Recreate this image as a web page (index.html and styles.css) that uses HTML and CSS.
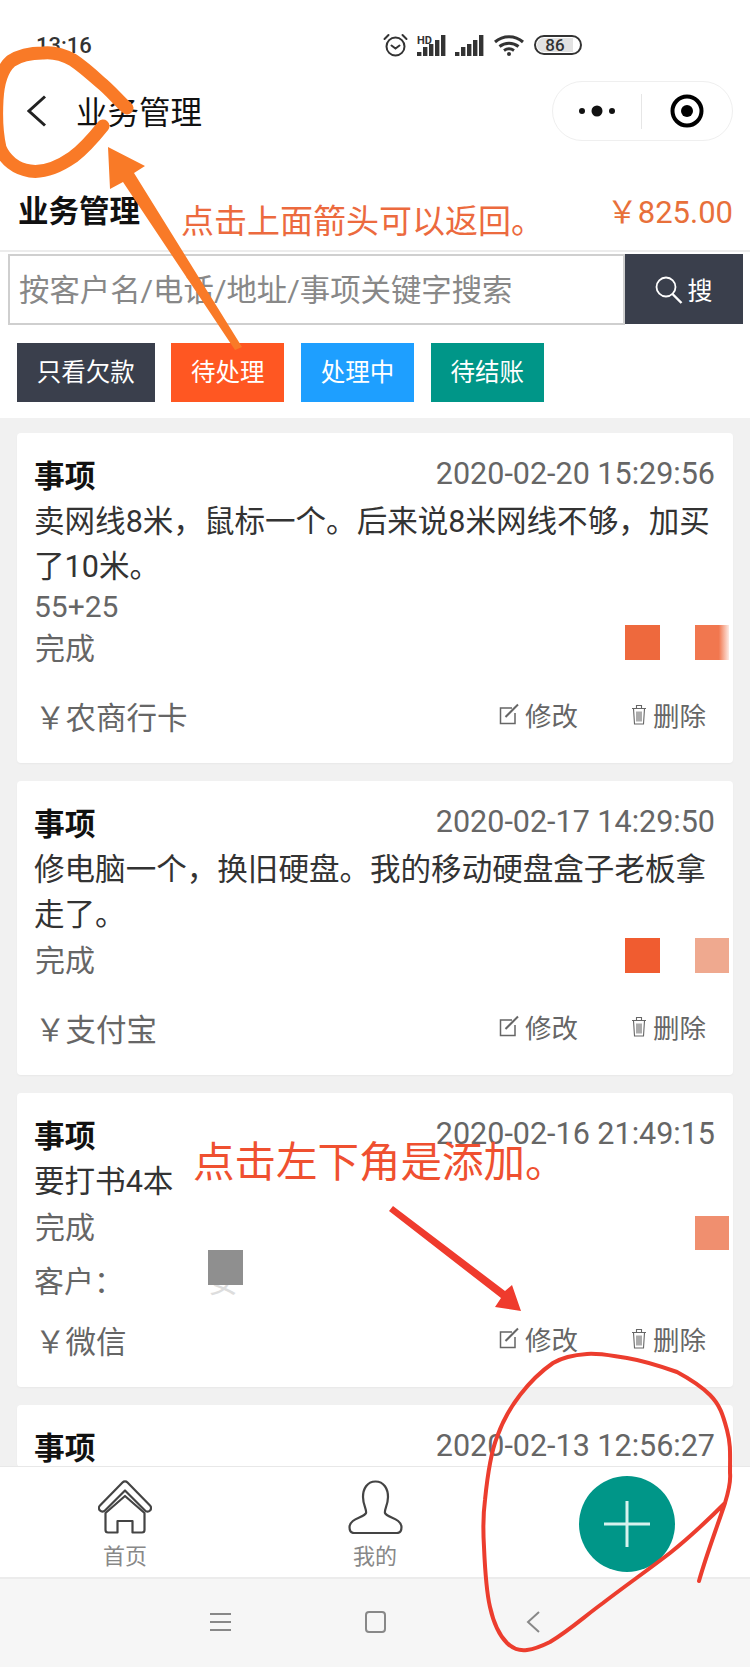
FILE: index.html
```html
<!DOCTYPE html>
<html lang="zh-CN">
<head>
<meta charset="utf-8">
<title>业务管理</title>
<link rel="stylesheet" href="styles.css">
</head>
<body>
<div class="phone">
  <header class="status-bar">
    <span class="clock">13:16</span>
    <div class="status-icons">
      <svg class="ic-alarm" width="25" height="24" viewBox="0 0 25 24" fill="none" stroke="#333" stroke-width="2" stroke-linecap="round"><circle cx="12.5" cy="13.5" r="9"/><path d="M8.5 12.5l4 3 4-3M1.5 6l4-4M23.5 6l-4-4"/></svg>
      <svg class="ic-signal" width="29" height="21" viewBox="0 0 29 21"><text x="0" y="9" class="hd">HD</text><g fill="#333"><rect x="0" y="17" width="4.4" height="4"/><rect x="6" y="12" width="4.4" height="9"/><rect x="12" y="9" width="4.4" height="12"/><rect x="18" y="5" width="4.4" height="16"/><rect x="24" y="0" width="4.4" height="21"/></g></svg>
      <svg class="ic-signal2" width="29" height="21" viewBox="0 0 29 21" fill="#333"><rect x="0" y="17" width="4.4" height="4"/><rect x="6" y="12" width="4.4" height="9"/><rect x="12" y="9" width="4.4" height="12"/><rect x="18" y="5" width="4.4" height="16"/><rect x="24" y="0" width="4.4" height="21"/></svg>
      <svg class="ic-wifi" width="30" height="21" viewBox="0 0 30 21" fill="none" stroke="#333" stroke-width="3"><path d="M1 7C9 0 21 0 29 7M5.500 11.500C11 7 19 7 24.500 11.500M10 15.500C13 13.500 17 13.500 20 15.500"/><circle cx="15" cy="19" r="2" fill="#333" stroke="none"/></svg>
      <div class="battery"><div class="battery-level">86</div></div>
    </div>
  </header>

  <nav class="nav-bar">
    <svg class="nav-back" width="20" height="32" viewBox="0 0 20 32" fill="none" stroke="#222" stroke-width="3"><path d="M18 1.500L2 16l16 14.500"/></svg>
    <h1 class="nav-title">业务管理</h1>
    <div class="capsule">
      <div class="capsule-cell">
        <svg width="36" height="12" viewBox="0 0 36 12" fill="#111"><circle cx="3" cy="6" r="3"/><circle cx="18" cy="6" r="5.500"/><circle cx="33" cy="6" r="3"/></svg>
      </div>
      <div class="capsule-cell capsule-cell-right">
        <svg width="34" height="34" viewBox="0 0 34 34"><circle cx="17" cy="17" r="14.500" fill="none" stroke="#000" stroke-width="4"/><circle cx="17" cy="17" r="6" fill="#000"/></svg>
      </div>
    </div>
  </nav>

  <section class="summary">
    <h2 class="summary-title">业务管理</h2>
    <span class="summary-amount">￥825.00</span>
  </section>

  <section class="search">
    <div class="search-input">按客户名/电话/地址/事项关键字搜索</div>
    <div class="search-btn">
      <svg width="28" height="30" viewBox="0 0 28 30" fill="none" stroke="#fff" stroke-width="1.800"><circle cx="11" cy="11" r="9.500"/><path d="M17.500 18l9 9" stroke-width="2.400"/></svg>
      <span>搜</span>
    </div>
  </section>

  <section class="filters">
    <span class="filter filter-dark">只看欠款</span>
    <span class="filter filter-orange">待处理</span>
    <span class="filter filter-blue">处理中</span>
    <span class="filter filter-teal">待结账</span>
  </section>

  <main class="list">
    <article class="card">
      <div class="card-head"><strong class="card-title">事项</strong><time class="card-date">2020-02-20 15:29:56</time></div>
      <p class="card-text">卖网线8米，鼠标一个。后来说8米网线不够，加买了10米。</p>
      <div class="card-note">55+25</div>
      <div class="card-status">完成</div>
      <div class="card-foot">
        <span class="pay">￥农商行卡</span>
        <div class="actions">
          <span class="action"><svg class="ic-edit" width="22" height="22" viewBox="0 0 22 22" fill="none" stroke="#666" stroke-width="1.500"><path d="M14 5H2.500v15.500H17V10"/><path d="M7.500 14L20 1.500" stroke-width="2"/></svg>修改</span>
          <span class="action"><svg class="ic-trash" width="16" height="21" viewBox="0 0 16 21" fill="none" stroke="#666" stroke-width="1.100"><path d="M1 4.500h14M5.500 4.500V1.500h5v3M2.500 4.500l1 15.500h9l1-15.500M6 7.500v10M8 7.500v10M10 7.500v10"/></svg>删除</span>
        </div>
      </div>
    </article>

    <article class="card">
      <div class="card-head"><strong class="card-title">事项</strong><time class="card-date">2020-02-17 14:29:50</time></div>
      <p class="card-text">修电脑一个，换旧硬盘。我的移动硬盘盒子老板拿走了。</p>
      <div class="card-status">完成</div>
      <div class="card-foot">
        <span class="pay">￥支付宝</span>
        <div class="actions">
          <span class="action"><svg class="ic-edit" width="22" height="22" viewBox="0 0 22 22" fill="none" stroke="#666" stroke-width="1.500"><path d="M14 5H2.500v15.500H17V10"/><path d="M7.500 14L20 1.500" stroke-width="2"/></svg>修改</span>
          <span class="action"><svg class="ic-trash" width="16" height="21" viewBox="0 0 16 21" fill="none" stroke="#666" stroke-width="1.100"><path d="M1 4.500h14M5.500 4.500V1.500h5v3M2.500 4.500l1 15.500h9l1-15.500M6 7.500v10M8 7.500v10M10 7.500v10"/></svg>删除</span>
        </div>
      </div>
    </article>

    <article class="card">
      <div class="card-head"><strong class="card-title">事项</strong><time class="card-date">2020-02-16 21:49:15</time></div>
      <p class="card-text">要打书4本</p>
      <div class="card-status">完成</div>
      <div class="card-customer">客户：<span class="customer-name">安</span></div>
      <div class="card-foot">
        <span class="pay">￥微信</span>
        <div class="actions">
          <span class="action"><svg class="ic-edit" width="22" height="22" viewBox="0 0 22 22" fill="none" stroke="#666" stroke-width="1.500"><path d="M14 5H2.500v15.500H17V10"/><path d="M7.500 14L20 1.500" stroke-width="2"/></svg>修改</span>
          <span class="action"><svg class="ic-trash" width="16" height="21" viewBox="0 0 16 21" fill="none" stroke="#666" stroke-width="1.100"><path d="M1 4.500h14M5.500 4.500V1.500h5v3M2.500 4.500l1 15.500h9l1-15.500M6 7.500v10M8 7.500v10M10 7.500v10"/></svg>删除</span>
        </div>
      </div>
    </article>

    <article class="card">
      <div class="card-head"><strong class="card-title">事项</strong><time class="card-date">2020-02-13 12:56:27</time></div>
    </article>
  </main>

  <footer class="tab-bar">
    <div class="tab">
      <svg width="54" height="54" viewBox="0 0 54 54" fill="none" stroke="#444" stroke-width="2.200" stroke-linejoin="round"><path d="M24.500 2.500L2 25.500a3.500 3.500 0 0 0 5 5L27 10.500l20 20a3.500 3.500 0 0 0 5-5L29.500 2.500a3.500 3.500 0 0 0-5 0Z"/><path d="M7.500 33V50a2.500 2.500 0 0 0 2.500 2.500H19.500V41H34.500V52.500H44a2.500 2.500 0 0 0 2.500-2.500V33L27 16Z"/></svg>
      <span class="tab-label">首页</span>
    </div>
    <div class="tab">
      <svg width="55" height="54" viewBox="0 0 55 54" fill="none" stroke="#444" stroke-width="2.200"><path d="M27.500 1.500C19 1.500 15 9 15 17C15 25 19 30 18 33C16 38 2 38 1.500 47C1.500 51 3 53 6 53H49C52 53 53.500 51 53.500 47C53 38 39 38 37 33C36 30 40 25 40 17C40 9 36 1.500 27.500 1.500Z"/></svg>
      <span class="tab-label">我的</span>
    </div>
    <div class="tab">
      <div class="fab">
        <svg width="48" height="48" viewBox="0 0 48 48" stroke="#d8f2ee" stroke-width="3"><path d="M1 24H47M24 1V47"/></svg>
      </div>
    </div>
  </footer>

  <div class="system-nav">
    <svg width="21" height="20" viewBox="0 0 21 20" stroke="#888" stroke-width="2"><path d="M0 2H21M0 10H21M0 18H21"/></svg>
    <svg width="21" height="22" viewBox="0 0 21 22" fill="none" stroke="#888" stroke-width="2"><rect x="1" y="1" width="19" height="20" rx="3"/></svg>
    <svg class="sys-back" width="14" height="22" viewBox="0 0 14 22" fill="none" stroke="#888" stroke-width="2"><path d="M13 1L2 11l11 10"/></svg>
  </div>

  <svg class="markup" width="750" height="1667" viewBox="0 0 750 1667" aria-hidden="true">
    <defs>
      <linearGradient id="fade" x1="0" x2="1" y1="0" y2="0"><stop offset="0.700" stop-color="#f1774f"/><stop offset="1" stop-color="#f1774f" stop-opacity="0.150"/></linearGradient>
    </defs>
    <rect x="625" y="625" width="35" height="35" fill="#ee693d"/>
    <rect x="695" y="625" width="34" height="35" fill="url(#fade)"/>
    <rect x="625" y="938" width="35" height="35" fill="#f05c30"/>
    <rect x="695" y="938" width="34" height="35" fill="#efa98f"/>
    <rect x="695" y="1216" width="34" height="34" fill="#f08f6f"/>
    <rect x="208" y="1250" width="35" height="35" fill="#8f8f8f"/>
    <path d="M127 108C118 100 110 90 100 82C90 73 82 66 73 60C62 54 52 52 43 53C30 53 20 55 11 61C3 68 -2 80 -3 100C-4 118 -3 135 0 148C5 160 16 169 30 171C44 173 60 166 73 157C85 148 95 136 103 126" fill="none" stroke="#f97a27" stroke-width="13" stroke-linecap="round"/>
    <path d="M108 147L145 166L134 173L242 347L235 350L123 182L110 189Z" fill="#f97a27"/>
    <path d="M389 1211L393 1206L505 1291L512 1285L521 1311L495 1307L501 1298Z" fill="#ef3b2d"/>
    <path d="M699 1581C706 1556 716 1530 725 1503C729 1490 731 1482 730 1473C730 1455 731 1445 727 1430C723 1415 720 1405 710 1395C700 1385 690 1379 677 1372C660 1366 645 1361 627 1358C612 1356 600 1353 587 1354C573 1355 563 1357 553 1363C540 1372 530 1382 520 1395C510 1408 503 1420 497 1437C490 1455 487 1480 485 1500C483 1515 483 1530 484 1547C485 1570 486 1590 490 1607C494 1625 500 1636 507 1643C513 1649 520 1651 527 1650C535 1649 542 1646 550 1642C570 1630 585 1616 603 1603C625 1586 648 1570 670 1553C690 1537 708 1520 725 1503" fill="none" stroke="#ec3d2e" stroke-width="4" stroke-linecap="round"/>
  </svg>
  <div class="note note-back">点击上面箭头可以返回。</div>
  <div class="note note-add">点击左下角是添加。</div>
</div>
</body>
</html>
```

FILE: styles.css
```css
* { box-sizing: border-box; }
html, body { margin: 0; padding: 0; background: #fff; }
body { font-family: Roboto, "Noto Sans CJK SC", sans-serif; color: #222; }

.phone {
  position: relative;
  width: 750px;
  height: 1667px;
  display: flex;
  flex-direction: column;
  overflow: hidden;
  background: #fff;
}

/* status bar */
.status-bar {
  height: 75px;
  flex: none;
  display: flex;
  justify-content: space-between;
  align-items: flex-start;
  padding: 33px 168px 0 36px;
}
.clock { margin-top: 2px; font-size: 22px; line-height: 22px; font-weight: 500; color: #333; }
.status-icons { display: flex; align-items: center; height: 24px; }
.ic-alarm { margin-right: 9px; }
.ic-signal { margin-right: 9px; }
.ic-signal2 { margin-right: 10px; }
.ic-wifi { margin-right: 10px; }
.hd { font: 700 11px Roboto, sans-serif; fill: #333; }
.battery {
  width: 48px;
  height: 20px;
  border: 2px solid #333;
  border-radius: 10px;
  padding: 1px;
  overflow: hidden;
}
.battery-level {
  width: 36px;
  height: 14px;
  background: #e2e2e2;
  border-radius: 7px 0 0 7px;
  font-size: 17px;
  line-height: 14px;
  font-weight: 500;
  text-align: center;
  color: #333;
}

/* nav */
.nav-bar {
  height: 72px;
  flex: none;
  display: flex;
  align-items: center;
  padding: 0 17px 0 27px;
}
.nav-back { flex: none; }
.nav-title { margin: 6px 0 0 29px; font-size: 31.500px; line-height: 40px; font-weight: 400; color: #111; flex: 1; }
.capsule {
  width: 181px;
  height: 60px;
  flex: none;
  display: flex;
  align-items: center;
  border: 1px solid #efefef;
  border-radius: 30px;
}
.capsule-cell {
  width: 89px;
  height: 35px;
  display: flex;
  align-items: center;
  justify-content: center;
  border-right: 1px solid #e6e6e6;
}
.capsule-cell-right { width: 91px; border-right: 0; }

/* summary */
.summary {
  height: 105px;
  flex: none;
  display: flex;
  justify-content: space-between;
  align-items: flex-start;
  padding: 45px 17px 0 18px;
  border-bottom: 2px solid #ececec;
}
.summary-title { margin: 0; font-size: 30.500px; line-height: 40px; font-weight: 700; color: #111; }
.summary-amount { margin-top: 1px; font-size: 31px; line-height: 40px; color: #e8703a; }

/* search */
.search {
  flex: none;
  display: flex;
  align-items: flex-start;
  padding: 2px 7px 0 8px;
}
.search-input {
  width: 617px;
  height: 71px;
  border: 2px solid #cfcfcf;
  padding: 3px 0 0 9px;
  font-size: 30.400px;
  line-height: 63px;
  color: #888;
  background: #fff;
}
.search-btn {
  width: 118px;
  height: 70px;
  display: flex;
  align-items: center;
  justify-content: center;
  gap: 4px;
  background: #3a3f4c;
  color: #fff;
  font-size: 25px;
}
.search-btn svg { margin-top: 3px; }

/* filters */
.filters {
  flex: none;
  display: flex;
  gap: 16.750px;
  padding: 18px 17px 16px;
}
.filter {
  height: 59px;
  padding: 0 19.750px;
  font-size: 24.500px;
  line-height: 60px;
  color: #fff;
}
.filter-dark { background: #3a3f4c; }
.filter-orange { background: #ff5722; }
.filter-blue { background: #1e9fff; }
.filter-teal { background: #009688; }

/* list */
.list {
  flex: 1;
  min-height: 0;
  overflow: hidden;
  display: flex;
  flex-direction: column;
  gap: 18px;
  padding: 15px 17px 0;
  background: #f1f1f1;
}
.card {
  flex: none;
  background: #fff;
  border-radius: 4px;
  padding: 18px 18px 0 17px;
  box-shadow: 0 1px 2px rgba(0, 0, 0, 0.04);
}
.card-head {
  height: 44px;
  display: flex;
  justify-content: space-between;
  align-items: center;
}
.card-title { font-size: 30.800px; font-weight: 700; color: #111; }
.card-date { margin-top: 1px; font-size: 30.500px; color: #666; }
.card-text {
  margin: 4px 0 0;
  font-size: 30.550px;
  line-height: 45px;
  color: #333;
}
.card-note { height: 36px; font-size: 30px; line-height: 36px; color: #666; }
.card-status { height: 48px; padding-left: 1px; font-size: 30px; line-height: 48px; color: #666; }
.card-customer { height: 45px; padding-top: 14px; font-size: 30px; line-height: 31px; color: #666; white-space: nowrap; }
.customer-name { margin-left: 84px; color: #ddd; }
.card-foot {
  height: 90px;
  display: flex;
  justify-content: space-between;
  align-items: center;
  padding: 0 9px 4px 0;
}
.pay { margin-left: 1px; font-size: 30.500px; color: #666; }
.actions { display: flex; gap: 21px; margin-top: -4px; color: #666; font-size: 26.500px; }
.action { display: flex; align-items: center; }
.ic-edit { margin-right: 5px; }
.ic-trash { margin-right: 6px; }
.card-foot .action:last-child { margin-left: 32px; }

/* tab bar */
.tab-bar {
  flex: none;
  height: 111px;
  display: grid;
  grid-template-columns: repeat(3, 250px);
  background: #fff;
  border-top: 1px solid #e8e8e8;
}
.tab {
  display: flex;
  flex-direction: column;
  align-items: center;
  padding-top: 13px;
}
.tab-label { margin-top: 8px; font-size: 22px; line-height: 30px; color: #888; }
.fab {
  width: 96px;
  height: 96px;
  margin: -4px 0 0 4px;
  border-radius: 50%;
  background: #009688;
  display: flex;
  align-items: center;
  justify-content: center;
}

/* system nav */
.system-nav {
  flex: none;
  height: 90px;
  display: flex;
  align-items: center;
  gap: 134px;
  padding: 0 0 2px 210px;
  background: #f6f6f6;
  border-top: 2px solid #ececec;
}
.sys-back { margin-left: 6px; }

/* hand-drawn annotations lying over the screenshot */
.markup { position: absolute; left: 0; top: 0; pointer-events: none; }
.note { position: absolute; white-space: nowrap; }
.note-back { left: 181px; top: 199px; font-size: 33px; line-height: 46px; color: #ec6a3e; }
.note-add { left: 193px; top: 1138px; font-size: 41.500px; line-height: 50px; color: #ef5030; }
```
